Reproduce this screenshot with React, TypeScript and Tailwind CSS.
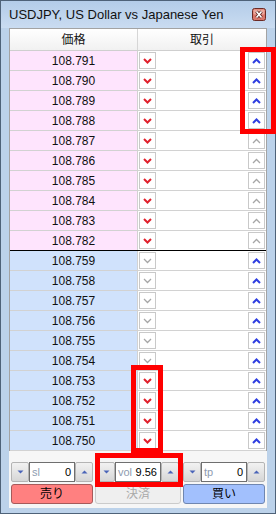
import React from "react";

type Row = { price: string; sell: boolean; buy: boolean; side: "ask" | "bid" };

const askPrices = ["108.791", "108.790", "108.789", "108.788", "108.787", "108.786", "108.785", "108.784", "108.783", "108.782"];
const bidPrices = ["108.759", "108.758", "108.757", "108.756", "108.755", "108.754", "108.753", "108.752", "108.751", "108.750"];

const rows: Row[] = [
  ...askPrices.map((p, i) => ({ price: p, sell: true, buy: i < 4, side: "ask" as const })),
  ...bidPrices.map((p, i) => ({ price: p, sell: i >= 6, buy: true, side: "bid" as const })),
];

function Chevron({ up, active }: { up?: boolean; active: boolean }) {
  const color = active ? (up ? "#2f3fe0" : "#e0202c") : "#a6a6a6";
  return (
    <svg width="9" height="6" viewBox="0 0 9 6">
      <path
        d={up ? "M1 5 L4.5 1.5 L8 5" : "M1 1 L4.5 4.5 L8 1"}
        fill="none"
        stroke={color}
        strokeWidth={active ? 2 : 1.3}
      />
    </svg>
  );
}

function OrderBox({ up, active }: { up?: boolean; active: boolean }) {
  return (
    <div className="w-[17px] h-[17px] bg-white border border-[#c9c9c9] flex items-center justify-center">
      <Chevron up={up} active={active} />
    </div>
  );
}

function SpinBtn({ up }: { up?: boolean }) {
  return (
    <div className="w-[18px] h-full flex items-center justify-center bg-gradient-to-b from-[#f2f2f2] to-[#d6d6d6] border border-[#b4b4b4] rounded-[2px]">
      <svg width="7" height="4" viewBox="0 0 7 4">
        <path d={up ? "M0.5 3.5 L3.5 0.5 L6.5 3.5 Z" : "M0.5 0.5 L6.5 0.5 L3.5 3.5 Z"} fill="#4a64b8" />
      </svg>
    </div>
  );
}

function Spin({ label, value }: { label: string; value: string }) {
  return (
    <div className="w-[82px] h-[20px] flex">
      <SpinBtn />
      <div className="flex-1 bg-white border border-[#6f6f6f] flex items-center justify-between pl-[2px] pr-[3px] text-[11px] leading-none">
        <span className="text-[#8e9cb0]">{label}</span>
        <span className="text-black">{value}</span>
      </div>
      <SpinBtn up />
    </div>
  );
}

export default function App() {
  return (
    <div className="relative w-[276px] h-[514px] overflow-hidden font-['Liberation_Sans','Noto_Sans_CJK_JP',sans-serif]">
      <div className="w-full h-full flex flex-col bg-[#bcd2ea] border border-[#4e6278]">
        {/* title bar */}
        <div className="h-[27px] flex items-center pl-[8px] pr-[9px] bg-gradient-to-b from-[#b3cce8] to-[#cadcf1]">
          <span className="text-[13px] text-[#111] flex-1 truncate">USDJPY, US Dollar vs Japanese Yen</span>
          <svg width="14" height="13" viewBox="0 0 14 13">
            <rect x="0.5" y="0.5" width="13" height="12" rx="2" fill="#d9766a" stroke="#6b2a24" />
            <rect x="1.5" y="1.5" width="11" height="5" rx="1" fill="#eba79c" />
            <path d="M4.5 3.5 L9.5 9.5 M9.5 3.5 L4.5 9.5" stroke="#5a2420" strokeWidth="3.2" />
            <path d="M4.5 3.5 L9.5 9.5 M9.5 3.5 L4.5 9.5" stroke="#ffffff" strokeWidth="1.6" />
          </svg>
        </div>

        {/* client area */}
        <div className="mx-[8px] h-[480px] flex flex-col bg-[#f6f6f6]">
          <div className="border-x border-t border-[#a3a3a3] bg-white">
            <div className="h-[22px] flex border-b border-[#cfcfcf] bg-gradient-to-b from-white to-[#f1f1f1] text-[12px] text-[#111]">
              <div className="w-[128px] border-r border-[#d6d6d6] flex items-center justify-center">価格</div>
              <div className="flex-1 flex items-center justify-center">取引</div>
            </div>
            {rows.map((r, i) => (
              <div
                key={r.price}
                className={`h-[20px] flex border-b ${i === 9 ? "border-black" : "border-[#d2d2d2]"}`}
              >
                <div
                  className={`w-[128px] border-r border-[#d2d2d2] flex items-center justify-center text-[12px] text-[#111] ${
                    r.side === "ask" ? "bg-[#fee4fd]" : "bg-[#d0e2fc]"
                  }`}
                >
                  {r.price}
                </div>
                <div className="flex-1 flex items-center justify-between px-[1px] bg-white">
                  <OrderBox active={r.sell} />
                  <OrderBox up active={r.buy} />
                </div>
              </div>
            ))}
          </div>

          {/* bottom panel */}
          <div className="flex flex-col px-[2px] pt-[11px] gap-[2px]">
            <div className="flex gap-[4px]">
              <Spin label="sl" value="0" />
              <Spin label="vol" value="9.56" />
              <Spin label="tp" value="0" />
            </div>
            <div className="flex gap-[2px] h-[20px] text-[12px]">
              <div className="w-[82px] rounded-[3px] border border-[#a65a5a] bg-[#ff8080] flex items-center justify-center text-black">売り</div>
              <div className="flex-1 rounded-[3px] border border-[#cbcbcb] bg-[#efefef] flex items-center justify-center text-[#a9a9a9]">決済</div>
              <div className="w-[82px] rounded-[3px] border border-[#6f86b0] bg-[#a2c0fd] flex items-center justify-center text-black">買い</div>
            </div>
          </div>
        </div>
        <div className="flex-1" />
      </div>

      {/* red annotation frames */}
      <div className="absolute left-[240px] top-[47px] w-[36px] h-[87px] border-[5px] border-[#ff0000]" />
      <div className="absolute left-[131px] top-[365px] w-[32px] h-[88px] border-[5px] border-[#ff0000]" />
      <div className="absolute left-[95px] top-[453px] w-[88px] h-[34px] border-[5px] border-[#ff0000]" />
    </div>
  );
}
